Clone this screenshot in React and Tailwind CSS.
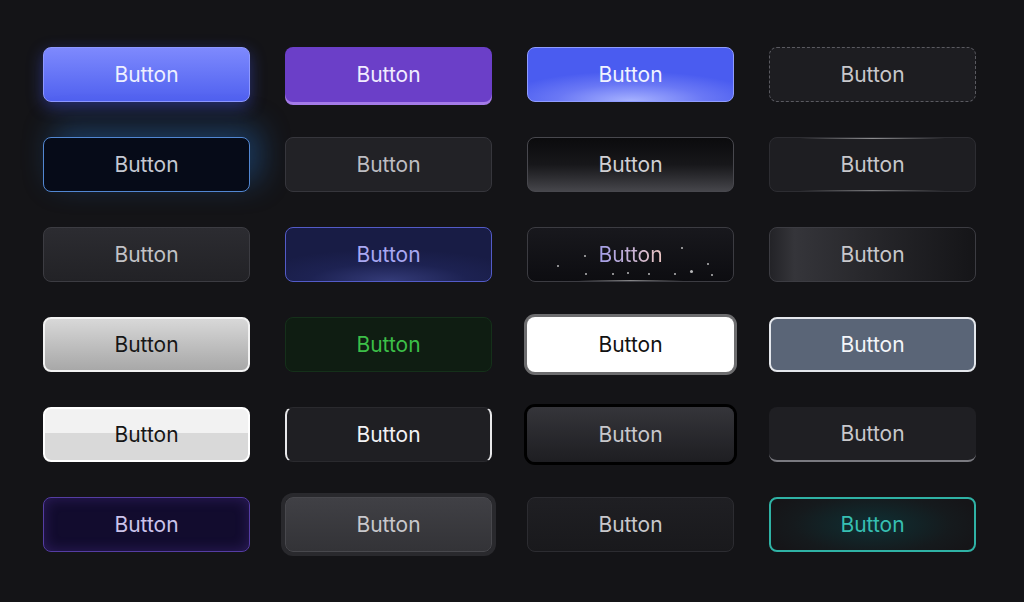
const base =
  'relative w-[207px] h-[55px] rounded-lg flex items-center justify-center text-[21px] font-normal'

const stars = [
  [56, 27, 2], [29, 37, 2], [57, 45, 2], [84, 45, 1.5], [99, 44, 2], [120, 45, 1.5],
  [146, 45, 2], [162, 42, 2.5], [153, 19, 2], [179, 35, 2], [183, 46, 2],
]

function Sparkle() {
  return (
    <button className={`${base} overflow-hidden border border-[#3c3c42] bg-gradient-to-b from-[#18181d] to-[#0d0d11]`}>
      {stars.map(([x, y, s], i) => (
        <span
          key={i}
          className="absolute rounded-full bg-white/70"
          style={{ left: x, top: y, width: s, height: s }}
        />
      ))}
      <span className="absolute bottom-0 left-[50px] right-[50px] h-px bg-gradient-to-r from-transparent via-white/50 to-transparent" />
      <span className="relative bg-gradient-to-r from-[#a29de8] to-[#ebc4c0] bg-clip-text text-transparent">Button</span>
    </button>
  )
}

export default function App() {
  return (
    <div className="min-h-[602px] w-full bg-[#141417] pl-[43px] pt-[47px]" style={{ fontFamily: 'Inter, "Noto Sans", sans-serif' }}>
      <div className="grid grid-cols-[repeat(4,207px)] gap-x-[35px] gap-y-[35px]">
        {/* row 1 */}
        <button className={`${base} border border-[#8e98ff] bg-gradient-to-b from-[#7e89fd] to-[#5060ef] text-[#eef0ff] shadow-[0_5px_16px_rgba(70,90,255,0.4)]`}>
          Button
        </button>
        <button className={`${base} bg-[#6b3fc8] text-[#f1ecff] shadow-[0_3px_0_#a47be8]`}>
          Button
        </button>
        <button className={`${base} border border-[#8f9cff] bg-[radial-gradient(ellipse_80%_70%_at_50%_100%,#a7b2ff_0%,#6a78f5_45%,#4a5cf0_80%)] text-[#f1f3ff]`}>
          Button
        </button>
        <button className={`${base} border border-dashed border-[#5a5a60] bg-[#1d1d21] text-[#c8c8cc]`}>
          Button
        </button>

        {/* row 2 */}
        <button className={`${base} border border-[#5287d2] bg-[#060b18] text-[#c4c8d2] shadow-[10px_-10px_30px_rgba(40,130,230,0.35)]`}>
          Button
        </button>
        <button className={`${base} border border-[#36363c] bg-[#222226] text-[#bdbdc2]`}>
          Button
        </button>
        <button className={`${base} border border-[#48484e] bg-gradient-to-b from-[#0b0b0d] via-[#17171a] to-[#46464b] text-[#d0d0d4]`}>
          Button
        </button>
        <button className={`${base} overflow-hidden border border-[#2d2d32] bg-[#1e1e22] text-[#c8c8cc]`}>
          <span className="absolute top-0 left-[30px] right-[30px] h-px bg-gradient-to-r from-transparent via-white/50 to-transparent" />
          <span className="absolute bottom-0 left-[30px] right-[30px] h-px bg-gradient-to-r from-transparent via-white/40 to-transparent" />
          Button
        </button>

        {/* row 3 */}
        <button className={`${base} border border-[#3c3c42] bg-gradient-to-b from-[#2c2c31] to-[#222226] text-[#c2c2c6]`}>
          Button
        </button>
        <button className={`${base} border border-[#535bc8] bg-[radial-gradient(ellipse_70%_60%_at_50%_100%,#343b78_0%,#1d2252_55%,#181c45_100%)] text-[#a9a8f2]`}>
          Button
        </button>
        <Sparkle />
        <button className={`${base} border border-[#3c3c42] bg-[linear-gradient(to_right,#232327_0%,#35353a_12%,#28282c_45%,#151518_100%)] text-[#c8c8cc]`}>
          Button
        </button>

        {/* row 4 */}
        <button className={`${base} border-2 border-[#f2f2f2] bg-gradient-to-b from-[#d8d8d8] to-[#a8a8a8] text-[#161616]`}>
          Button
        </button>
        <button className={`${base} border border-[#15301a] bg-[#0f1d12] text-[#3cbf48]`}>
          Button
        </button>
        <button className={`${base} bg-white text-[#111111] shadow-[0_0_0_3px_#6d6d6f]`}>
          Button
        </button>
        <button className={`${base} border-2 border-[#e4e7ec] bg-[#5a6577] text-[#f4f6fa]`}>
          Button
        </button>

        {/* row 5 */}
        <button className={`${base} overflow-hidden border-2 border-white bg-[linear-gradient(to_bottom,#f2f2f2_0%,#f2f2f2_48%,#d9d9d9_48%,#d9d9d9_100%)] text-[#151515]`}>
          Button
        </button>
        <button className={`${base} border-x-2 border-y border-x-[#e8e8ea] border-y-[#2a2a2e] bg-[#1f1f23] text-[#f2f2f4]`}>
          Button
        </button>
        <button className={`${base} bg-gradient-to-b from-[#35353a] to-[#1e1e22] text-[#c8c8cc] shadow-[0_0_0_3px_#000]`}>
          Button
        </button>
        <button className={`${base} border-b-2 border-[#7a7a80] bg-[#1f1f23] text-[#c8c8cc]`}>
          Button
        </button>

        {/* row 6 */}
        <button className={`${base} border border-[#553da3] bg-[#120c2e] text-[#cbc3ea] shadow-[inset_0_0_14px_rgba(110,70,200,0.3)]`}>
          Button
        </button>
        <button className={`${base} border border-[#48484d] bg-gradient-to-b from-[#404045] to-[#333337] text-[#c8c8cc] shadow-[0_0_0_4px_#29292d]`}>
          Button
        </button>
        <button className={`${base} border border-[#2c2c31] bg-gradient-to-b from-[#1f1f23] to-[#19191c] text-[#c8c8cc]`}>
          Button
        </button>
        <button className={`${base} border-2 border-[#2fb2a5] bg-[radial-gradient(ellipse_55%_80%_at_50%_50%,#0f2f33_0%,#151a1d_70%,#151518_100%)] text-[#37bfb2]`}>
          Button
        </button>
      </div>
    </div>
  )
}
